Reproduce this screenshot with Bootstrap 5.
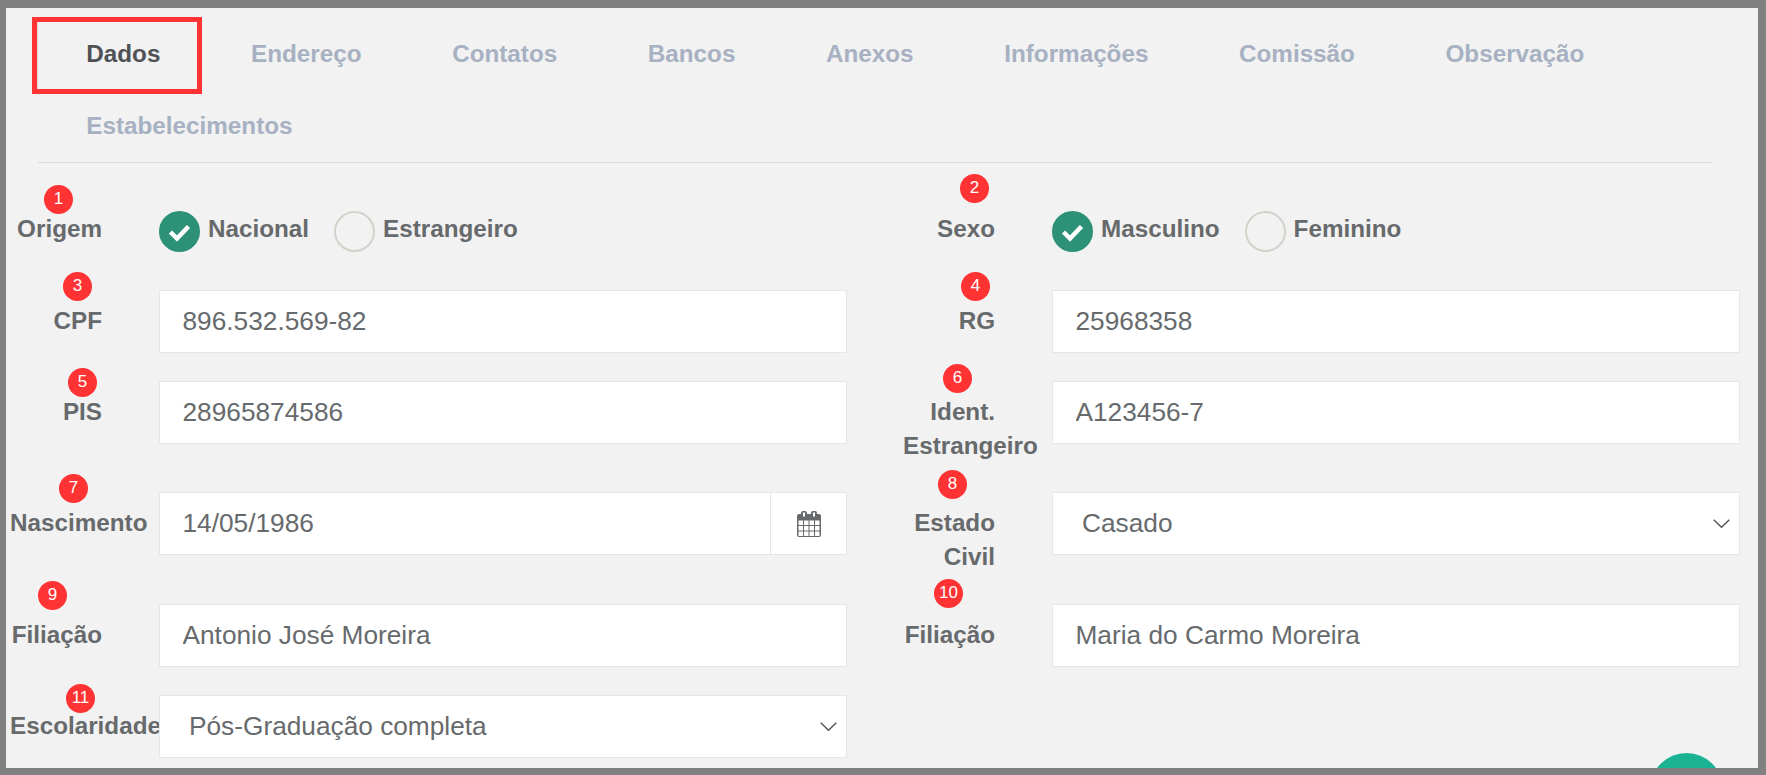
<!DOCTYPE html>
<html lang="pt-BR">
<head>
    <meta charset="UTF-8" />
    <meta name="viewport" content="width=device-width, initial-scale=1.0"/>
    <title>Cadastro - Dados</title>
    <link href="https://cdn.jsdelivr.net/npm/bootstrap@5.3.2/dist/css/bootstrap.min.css" rel="stylesheet"/>
    <style>
        html, body { height: 100%; overflow: hidden; }
        body { background: #808080; font-family: "Liberation Sans", Arial, sans-serif; color: #676a6c; }
        .shot-frame { position: relative; height: 775px; padding: 8px 8px 7px 6px; }
        .shot-panel { position: relative; height: 100%; overflow: hidden; background: #f2f2f2; padding: 8px 0 0 4px; }

        .tab-strip { margin: 0 46px 0 28px; padding: 1px 0 1px 3px; border-bottom: 1px solid #dcdcdc; }
        .tab-strip .nav-link { padding: 23px 45.3px 21px; font-size: 24.25px; line-height: 28px; font-weight: 700; color: #a7b1c2; }
        .tab-strip .nav-link.active { color: #505155; }

        .form-area { padding-top: 48px; }
        .form-line { display: flex; gap: 56px; margin-bottom: 28px; }
        .form-line.radio-line { margin-bottom: 38px; }
        .form-line.wide-after { margin-bottom: 29px; }
        .field { display: grid; grid-template-columns: 92px 688px; column-gap: 57px; align-items: start; width: 837px; }
        .field-label { margin: 0; padding: 13.5px 0 1.5px; font-size: 24.25px; line-height: 34px; font-weight: 700; text-align: right; }
        .radio-line .field-label { padding: 1px 0 0; }

        .field .form-control, .field .form-select {
            height: 63px; font-size: 26.25px; color: #676a6c; background-color: #fff;
            border: 1px solid #e5e6e7; border-radius: 1px; padding: 0 22.5px;
        }
        .field .form-select {
            padding-left: 22px; text-indent: 7px;
            background-image: url("data:image/svg+xml,%3csvg xmlns='http://www.w3.org/2000/svg' viewBox='0 0 17 9'%3e%3cpath fill='none' stroke='%23555' stroke-width='1.4' d='M.7.7l7.8 7.6L16.3.7'/%3e%3c/svg%3e");
            background-size: 17px 9px; background-position: right 9px center;
        }
        .field .input-group-text { width: 77px; justify-content: center; background: #fff; border: 1px solid #e5e6e7; border-radius: 1px; padding: 0; }

        .radio-group { display: flex; align-items: center; gap: 25px; height: 41px; }
        .radio-opt { display: flex; align-items: flex-start; gap: 8px; margin: 0; padding: 0; min-height: 0; font-size: 24.25px; line-height: 36px; font-weight: 700; }
        .radio-opt .form-check-input {
            float: none; width: 41px; height: 41px; margin: 0; background-color: transparent;
            border: 2px solid #d5d1ca;
        }
        .radio-opt .form-check-input:checked {
            background-color: #2d9178; border-color: #2d9178;
            background-image: url("data:image/svg+xml,%3csvg xmlns='http://www.w3.org/2000/svg' viewBox='0 0 41 41'%3e%3cpath fill='none' stroke='%23fff' stroke-width='4.5' d='M11.5 21l6.5 6.5 11.5-12'/%3e%3c/svg%3e");
            background-size: 41px 41px;
        }

        /* anotacoes do print, por cima da tela */
        .pin { position: absolute; width: 29px; height: 29px; border-radius: 50%; background: #ff3333; color: #fff; font-size: 17px; line-height: 28px; text-align: center; }
        .pin-1 { left: 38px; top: 177px; }
        .pin-2 { left: 954px; top: 166px; }
        .pin-3 { left: 57px; top: 264px; }
        .pin-4 { left: 955px; top: 264px; }
        .pin-5 { left: 62px; top: 360px; }
        .pin-6 { left: 937px; top: 356px; }
        .pin-7 { left: 53px; top: 466px; }
        .pin-8 { left: 932px; top: 462px; }
        .pin-9 { left: 32px; top: 573px; }
        .pin-10 { left: 928px; top: 571px; }
        .pin-11 { left: 60px; top: 676px; }
        .mark-box { position: absolute; left: 26px; top: 9px; width: 170px; height: 77px; border: 5px solid #ff3333; box-shadow: inset 1px 0 0 #dcdcdc; }
        .fab-round { position: absolute; left: 1644px; top: 745px; width: 73px; height: 73px; border-radius: 50%; background: #1ab394; }
    </style>
</head>
<body>
    <div class="shot-frame">
        <div class="shot-panel">
            <ul class="nav tab-strip">
                <li class="nav-item"><a class="nav-link active" href="#">Dados</a></li>
                <li class="nav-item"><a class="nav-link" href="#">Endereço</a></li>
                <li class="nav-item"><a class="nav-link" href="#">Contatos</a></li>
                <li class="nav-item"><a class="nav-link" href="#">Bancos</a></li>
                <li class="nav-item"><a class="nav-link" href="#">Anexos</a></li>
                <li class="nav-item"><a class="nav-link" href="#">Informações</a></li>
                <li class="nav-item"><a class="nav-link" href="#">Comissão</a></li>
                <li class="nav-item"><a class="nav-link" href="#">Observação</a></li>
                <li class="nav-item"><a class="nav-link" href="#">Estabelecimentos</a></li>
            </ul>

            <form class="form-area">
                <div class="form-line radio-line">
                    <div class="field">
                        <label class="field-label">Origem</label>
                        <div class="radio-group">
                            <label class="radio-opt"><input class="form-check-input" type="radio" name="origem" checked />Nacional</label>
                            <label class="radio-opt"><input class="form-check-input" type="radio" name="origem" />Estrangeiro</label>
                        </div>
                    </div>
                    <div class="field">
                        <label class="field-label">Sexo</label>
                        <div class="radio-group">
                            <label class="radio-opt"><input class="form-check-input" type="radio" name="sexo" checked />Masculino</label>
                            <label class="radio-opt"><input class="form-check-input" type="radio" name="sexo" />Feminino</label>
                        </div>
                    </div>
                </div>

                <div class="form-line">
                    <div class="field">
                        <label class="field-label">CPF</label>
                        <input type="text" class="form-control" value="896.532.569-82" />
                    </div>
                    <div class="field">
                        <label class="field-label">RG</label>
                        <input type="text" class="form-control" value="25968358" />
                    </div>
                </div>

                <div class="form-line">
                    <div class="field">
                        <label class="field-label">PIS</label>
                        <input type="text" class="form-control" value="28965874586" />
                    </div>
                    <div class="field">
                        <label class="field-label">Ident. Estrangeiro</label>
                        <input type="text" class="form-control" value="A123456-7" />
                    </div>
                </div>

                <div class="form-line wide-after">
                    <div class="field">
                        <label class="field-label">Nascimento</label>
                        <div class="input-group">
                            <input type="text" class="form-control" value="14/05/1986" />
                            <span class="input-group-text">
                                <svg width="24" height="26" viewBox="0 0 24 26" aria-hidden="true">
                                    <rect y="3" width="24" height="23" rx="2" fill="#676a6c"/>
                                    <rect x="4" width="6" height="7" rx="2" fill="#676a6c"/>
                                    <rect x="14" width="6" height="7" rx="2" fill="#676a6c"/>
                                    <rect x="6" y="1.5" width="2" height="4" fill="#fff"/>
                                    <rect x="16" y="1.5" width="2" height="4" fill="#fff"/>
                                    <path fill="#fff" d="M1.5 9.5H6V14H1.5zM7 9.5h4.5V14H7zM12.5 9.5H17V14h-4.5zM18 9.5h4.5V14H18zM1.5 15H6v4.5H1.5zM7 15h4.5v4.5H7zM12.5 15H17v4.5h-4.5zM18 15h4.5v4.5H18zM1.5 20.5H6V25H1.5zM7 20.5h4.5V25H7zM12.5 20.5H17V25h-4.5zM18 20.5h4.5V25H18z"/>
                                </svg>
                            </span>
                        </div>
                    </div>
                    <div class="field">
                        <label class="field-label">Estado Civil</label>
                        <select class="form-select"><option>Casado</option></select>
                    </div>
                </div>

                <div class="form-line">
                    <div class="field">
                        <label class="field-label">Filiação</label>
                        <input type="text" class="form-control" value="Antonio José Moreira" />
                    </div>
                    <div class="field">
                        <label class="field-label">Filiação</label>
                        <input type="text" class="form-control" value="Maria do Carmo Moreira" />
                    </div>
                </div>

                <div class="form-line">
                    <div class="field">
                        <label class="field-label">Escolaridade</label>
                        <select class="form-select"><option>Pós-Graduação completa</option></select>
                    </div>
                </div>
            </form>

            <span class="mark-box"></span>
            <span class="pin pin-1">1</span>
            <span class="pin pin-2">2</span>
            <span class="pin pin-3">3</span>
            <span class="pin pin-4">4</span>
            <span class="pin pin-5">5</span>
            <span class="pin pin-6">6</span>
            <span class="pin pin-7">7</span>
            <span class="pin pin-8">8</span>
            <span class="pin pin-9">9</span>
            <span class="pin pin-10">10</span>
            <span class="pin pin-11">11</span>
            <span class="fab-round"></span>
        </div>
    </div>
    <script src="https://cdn.jsdelivr.net/npm/bootstrap@5.3.2/dist/js/bootstrap.bundle.min.js"></script>
</body>
</html>
